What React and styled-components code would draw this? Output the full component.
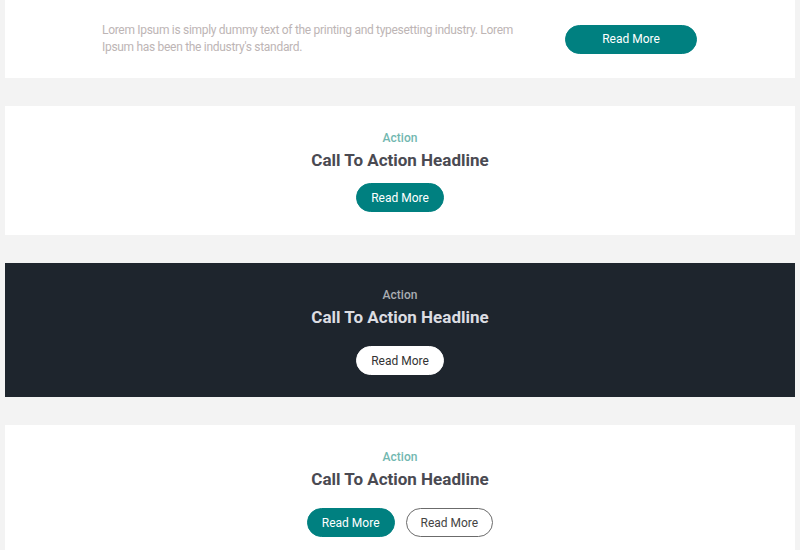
import React from "react";
import styled, { createGlobalStyle, css } from "styled-components";

const Global = createGlobalStyle`
  html, body { margin: 0; padding: 0; background: #f3f3f3; }
  body { font-family: Roboto, "Liberation Sans", Arial, sans-serif; }
  * { box-sizing: border-box; }
`;

const Page = styled.div`
  display: flex;
  flex-direction: column;
  gap: 28px;
  padding: 0 5px 40px;
`;

const Card = styled.section`
  background: ${(p) => (p.$dark ? "#1e252d" : "#ffffff")};
  padding: ${(p) => p.$pad || "0"};
`;

const Banner = styled(Card)`
  height: 78px;
  display: flex;
  align-items: center;
  padding-left: 97px;
  gap: 48px;
`;

const Lead = styled.p`
  margin: 0;
  flex: 0 0 415px;
  font-size: 12px;
  letter-spacing: -0.3px;
  line-height: 17px;
  color: #bdb5b5;
`;

const Centered = styled(Card)`
  display: flex;
  flex-direction: column;
  align-items: center;
  text-align: center;
`;

const Kicker = styled.div`
  font-size: 12px;
  line-height: 16px;
  font-weight: 500;
  color: ${(p) => (p.$dark ? "#a9adb2" : "#72b7b0")};
`;

const Headline = styled.h2`
  margin: 3px 0 0;
  font-size: 17px;
  line-height: 22px;
  font-weight: 700;
  color: ${(p) => (p.$dark ? "#dcdde2" : "#4a4a52")};
`;

const Actions = styled.div`
  display: flex;
  gap: 11px;
  margin-top: ${(p) => p.$gap || "12px"};
`;

const variants = {
  solid: css`
    background: #008080;
    color: #ffffff;
    border: 1px solid #008080;
  `,
  light: css`
    background: #ffffff;
    color: #333333;
    border: 1px solid #ffffff;
  `,
  outline: css`
    background: #ffffff;
    color: #444444;
    border: 1px solid #6b6b6b;
  `,
};

const Button = styled.button`
  flex-shrink: 0;
  height: 29px;
  padding: 0 14px;
  min-width: ${(p) => p.$min || "auto"};
  border-radius: 15px;
  font-family: inherit;
  font-size: 12px;
  cursor: pointer;
  ${(p) => variants[p.$variant || "solid"]}
`;

export default function App() {
  return (
    <>
      <Global />
      <Page>
        <Banner>
          <Lead>
            Lorem Ipsum is simply dummy text of the printing and typesetting
            industry. Lorem Ipsum has been the industry's standard.
          </Lead>
          <Button $min="132px">Read More</Button>
        </Banner>

        <Centered $pad="24px 0 23px">
          <Kicker>Action</Kicker>
          <Headline>Call To Action Headline</Headline>
          <Actions>
            <Button>Read More</Button>
          </Actions>
        </Centered>

        <Centered $dark $pad="24px 0 22px">
          <Kicker $dark>Action</Kicker>
          <Headline $dark>Call To Action Headline</Headline>
          <Actions $gap="18px">
            <Button $variant="light">Read More</Button>
          </Actions>
        </Centered>

        <Centered $pad="24px 0 23px">
          <Kicker>Action</Kicker>
          <Headline>Call To Action Headline</Headline>
          <Actions $gap="18px">
            <Button>Read More</Button>
            <Button $variant="outline">Read More</Button>
          </Actions>
        </Centered>
      </Page>
    </>
  );
}
